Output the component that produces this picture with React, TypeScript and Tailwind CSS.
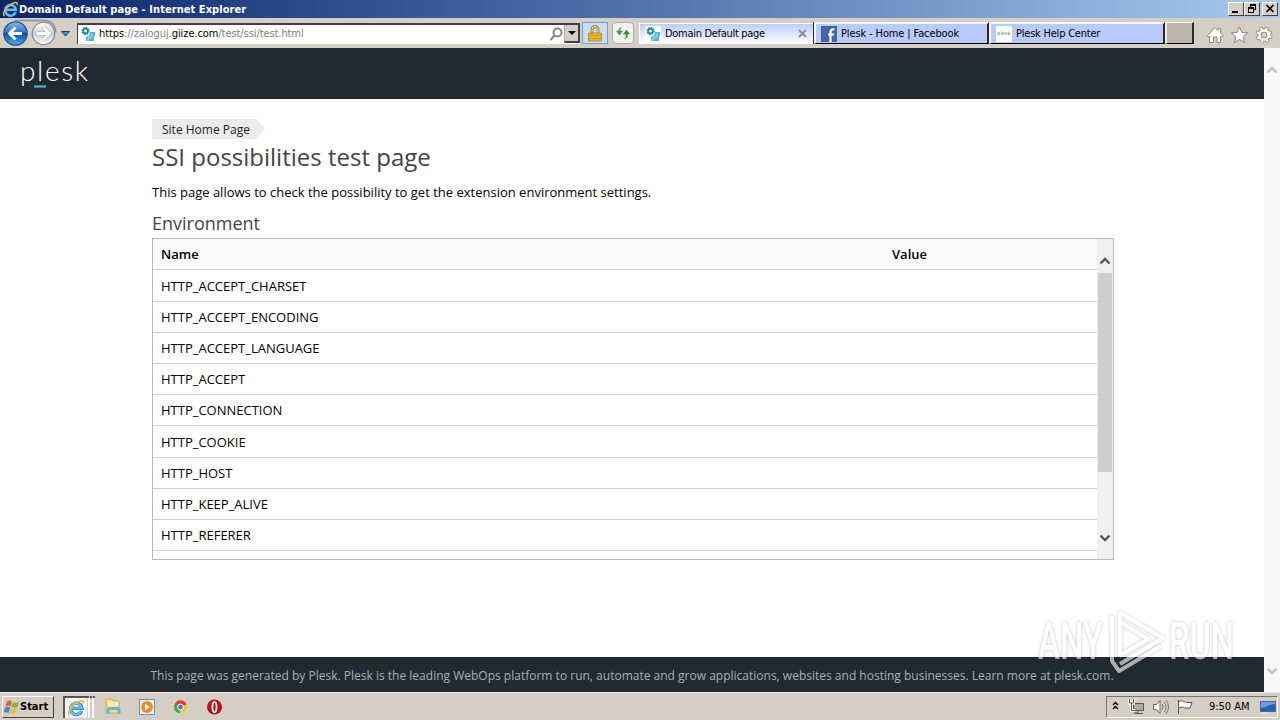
import type { ReactNode } from 'react';
import clsx from 'clsx';

const rows = [
  { name: 'HTTP_ACCEPT_CHARSET', tall: true },
  { name: 'HTTP_ACCEPT_ENCODING' },
  { name: 'HTTP_ACCEPT_LANGUAGE' },
  { name: 'HTTP_ACCEPT' },
  { name: 'HTTP_CONNECTION' },
  { name: 'HTTP_COOKIE', tall: true },
  { name: 'HTTP_HOST' },
  { name: 'HTTP_KEEP_ALIVE' },
  { name: 'HTTP_REFERER' },
];

function IeIcon({ size }: { size: number }) {
  return (
    <svg width={size} height={size} viewBox="0 0 20 20" fill="none" className="shrink-0">
      <path d="M16.2 13.3A6.3 6.3 0 1 1 16.6 10.4H5" stroke="#1769b5" strokeWidth="3.6" />
      <path d="M16 13A6.3 6.3 0 1 1 16.3 10.4H5" stroke="#5cc0f2" strokeWidth="2.6" />
      <path d="M3 17.6C-1 16 5.500 6 13 2.700c4-1.800 6-.6 4.900 2.400" stroke="#f1b82d" strokeWidth="1.800" />
    </svg>
  );
}

function DomainIcon() {
  return (
    <svg width="16" height="16" viewBox="0 0 16 16" className="shrink-0">
      <path d="M0 0h16v16H0z" fill="#fff" />
      <circle cx="5.5" cy="5" r="2.4" fill="none" stroke="#1c8190" strokeWidth="1.8" />
      <circle cx="5.5" cy="5" r="3.6" fill="none" stroke="#1c8190" strokeWidth="1.2" strokeDasharray="1.4 1.4" />
      <path d="M10 6h5v4l-1 1v4H6v-4l3-1z" fill="#50b6db" />
      <path d="M8 15v-3h3V9h3" stroke="#c9eefa" fill="none" strokeWidth="1" strokeDasharray="2 1" />
    </svg>
  );
}

function WindowButton({ children, className }: { children: ReactNode; className?: string }) {
  return (
    <div className={clsx('h-[14px] w-4 border border-t-white border-l-white border-r-[#404040] border-b-[#404040] bg-[#d6cfc6]', className)}>
      <svg width="14" height="12" viewBox="0 0 14 12" fill="none" stroke="#000" shapeRendering="crispEdges">
        {children}
      </svg>
    </div>
  );
}

function TitleBar() {
  return (
    <div className="flex h-[18px] items-center bg-gradient-to-r from-[#0a246a] via-[#5472ab] to-[#a6caf0] pr-0.5 pl-0.5">
      <IeIcon size={17} />
      <span className="flex-1 pt-px text-[11px] leading-[17px] font-bold tracking-[0.06px] whitespace-nowrap text-white">
        Domain Default page - Internet Explorer
      </span>
      <WindowButton>
        <path d="M3 9h6" strokeWidth="2" />
      </WindowButton>
      <WindowButton>
        <path d="M5 2h6" strokeWidth="2" />
        <path d="M5.500 2v3M10.500 2v5M8 6.500h3" />
        <path d="M3 5h6" strokeWidth="2" />
        <path d="M3.500 5v5M8.500 5v5M3 9.500h6" />
      </WindowButton>
      <WindowButton className="ml-0.5">
        <path d="M3.500 2l7 7M10.500 2l-7 7" strokeWidth="1.700" shapeRendering="auto" />
      </WindowButton>
    </div>
  );
}

function NavButtons() {
  return (
    <svg width="77" height="30" viewBox="0 0 77 30" className="shrink-0">
      <defs>
        <linearGradient id="back" x1="0" y1="0" x2="0" y2="1">
          <stop offset="0" stopColor="#8bb9ee" />
          <stop offset=".45" stopColor="#2d6ecb" />
          <stop offset=".5" stopColor="#0c47a5" />
          <stop offset="1" stopColor="#48b4f4" />
        </linearGradient>
        <linearGradient id="forward" x1="0" y1="0" x2="0" y2="1">
          <stop offset="0" stopColor="#fbfcfd" />
          <stop offset=".5" stopColor="#cbd1d9" />
          <stop offset="1" stopColor="#f9fbfd" />
        </linearGradient>
      </defs>
      <path d="M15 2.500h29c7 0 11 5 12 12" fill="none" stroke="#8995a4" strokeWidth="1.500" />
      <circle cx="15.500" cy="15.500" r="11.700" fill="url(#back)" stroke="#294e80" strokeWidth="1.200" />
      <path d="M22 15.500H10M15.500 9.500l-6 6 6 6" fill="none" stroke="#fff" strokeWidth="3" />
      <circle cx="43.500" cy="15.500" r="11.200" fill="url(#forward)" stroke="#7b8490" strokeWidth="1.100" />
      <path d="M37 15.500h12M43.500 9.500l6 6-6 6" fill="none" stroke="#a4abb3" strokeWidth="4" />
      <path d="M37 15.500h12M43.500 9.500l6 6-6 6" fill="none" stroke="#fff" strokeWidth="2.800" />
      <path d="M61.500 13.500h8l-4 4.500z" fill="#3d98cf" stroke="#153e7a" />
    </svg>
  );
}

function AddressBar() {
  return (
    <div className="flex h-[21px] w-[503px] shrink-0 items-center border-t-2 border-l border-[#453b50] bg-white pl-0.5">
      <DomainIcon />
      <span className="ml-[3px] flex-1 pt-px text-[11px] tracking-[-0.08px] whitespace-nowrap text-[#808080]">
        <span className="text-black">https</span>://zaloguj.<span className="text-black">giize.com</span>/test/ssi/test.html
      </span>
      <svg width="15" height="15" viewBox="0 0 15 15" fill="none" stroke="#858585">
        <circle cx="8.500" cy="5.500" r="4" strokeWidth="2" />
        <path d="M5.500 8.500L1.500 13" strokeWidth="2.200" />
      </svg>
      <div className="flex h-[18px] w-4 items-center justify-center border-r-2 border-b-2 border-l border-l-[#aaa] border-r-[#404040] border-b-[#404040] bg-[#d5cec5]">
        <svg width="8" height="4" viewBox="0 0 8 4">
          <path d="M0 0h8L4 4z" />
        </svg>
      </div>
    </div>
  );
}

function Tab({ icon, label, className }: { icon: ReactNode; label: string; className: string }) {
  return (
    <div className={clsx('flex h-[22px] shrink-0 items-center border-t-2 border-r-2 border-b border-l-2 border-t-[#f5f5f5] border-r-[#292929] border-b-black border-l-[#f5f5f5] bg-[#b9caff] pl-[5px]', className)}>
      {icon}
      <span className="ml-1 pt-px text-[11px] whitespace-nowrap">{label}</span>
    </div>
  );
}

function Toolbar() {
  return (
    <div className="flex h-[30px] items-center bg-[#d5cec5]">
      <NavButtons />
      <AddressBar />
      <div className="ml-0.5 flex h-[22px] w-[26px] shrink-0 items-center justify-center border border-[#6e9fd8] bg-[#c9ddf8]">
        <svg width="14" height="17" viewBox="0 0 14 17">
          <path d="M4 8V4.500a3 3 0 0 1 6 0V8" fill="none" stroke="#a98443" strokeWidth="3" />
          <path d="M4 8V4.500a3 3 0 0 1 6 0V8" fill="none" stroke="#f3dca0" />
          <path d="M.5 8h13v8H.5z" fill="#eeb321" stroke="#a47313" strokeWidth=".6" />
          <path d="M1 10.500h12M1 13.500h12" stroke="#d09c22" />
        </svg>
      </div>
      <div className="ml-1 flex h-[22px] w-[22px] shrink-0 items-center justify-center rounded-sm border border-[#b0aca7] bg-[#eff2ef]">
        <svg width="14" height="14" viewBox="0 0 14 14">
          <path d="M5.500 1.500C3.500 1.500 4 4 4 5h2.500L3.500 9 .5 5H3C3 2 4 1.500 5.500 1.500z" fill="#4b9b49" stroke="#36853b" strokeWidth=".5" />
          <path d="M8.500 12.500C10.500 12.500 10 10 10 8H7.500L10.500 4l3 4H11.500c0 3-1 4.500-3 4.500z" fill="#299737" stroke="#23802d" strokeWidth=".5" />
        </svg>
      </div>
      <div className="ml-[5px] flex h-[21px] w-[174px] shrink-0 items-center border-t border-l border-white bg-gradient-to-b from-[#bccdfb] to-white pr-1.5 pl-[5px]">
        <DomainIcon />
        <span className="ml-1 flex-1 pt-px text-[11px] tracking-[-0.3px] whitespace-nowrap">Domain Default page</span>
        <svg width="9" height="9" viewBox="0 0 9 9" stroke="#858a98" strokeWidth="1.800">
          <path d="M1 1l7 7M8 1L1 8" />
        </svg>
      </div>
      <div className="h-[22px] w-px shrink-0 bg-[#292929]" />
      <Tab
        label="Plesk - Home | Facebook"
        className="w-[175px] tracking-[-0.12px]"
        icon={
          <svg width="16" height="16" viewBox="0 0 16 16">
            <path d="M0 0h16v16H0z" fill="#4264aa" />
            <path d="M9.500 16V6.500c0-2.500 1-3.500 4-3.200M7 8.500h6" fill="none" stroke="#fff" strokeWidth="2.200" />
          </svg>
        }
      />
      <Tab
        label="Plesk Help Center"
        className="w-[176px] pl-1.5 tracking-[-0.22px]"
        icon={<span className="flex h-4 w-4 items-center justify-center bg-white text-[5px] tracking-[0.3px] text-[#555]">plesk</span>}
      />
      <div className="h-[22px] w-[29px] shrink-0 border-t border-r-2 border-b border-l-2 border-t-white border-r-[#292929] border-b-black border-l-[#eee] bg-[#bdb5ad]" />
      <svg width="86" height="30" viewBox="1194 18 86 30" fill="#fff" stroke="#8b8580" strokeLinejoin="round">
        <path d="M1207.500 35.500L1215 27.500l3 3V28.500h2.500V33l2.500 2.500-1.500 1.500-1-1v6.500H1217V37H1213.500v5.500H1209.500V36l-1 1z" />
        <path d="M1239.500 27l2.300 5.300 5.700.5-4.300 3.800 1.300 5.900-5-3.200-5 3.200 1.300-5.900-4.300-3.800 5.700-.5z" />
        <circle cx="1264" cy="35" r="6.400" fill="none" stroke="#8b8580" strokeWidth="4" strokeDasharray="3.200 1.827" />
        <circle cx="1264" cy="35" r="4.600" fill="none" stroke="#8b8580" strokeWidth="4.400" />
        <circle cx="1264" cy="35" r="6.400" fill="none" stroke="#fff" strokeWidth="2.600" strokeDasharray="2.100 2.927" strokeDashoffset="-.55" />
        <circle cx="1264" cy="35" r="4.600" fill="none" stroke="#fff" strokeWidth="2.500" />
      </svg>
    </div>
  );
}

function Chevron({ down, className }: { down?: boolean; className?: string }) {
  return (
    <svg width="12" height="8" viewBox="0 0 12 8" fill="none" stroke="currentColor" strokeWidth="2.300" className={className}>
      <path d={down ? 'M1.500 1.500L6 6l4.500-4.500' : 'M1.500 6.500L6 2l4.500 4.500'} />
    </svg>
  );
}

function EnvTable() {
  return (
    <div className="flex h-[322px] w-[962px] overflow-hidden border border-[#bababa] text-[13px]">
      <div className="flex-1">
        <div className="flex h-[31px] items-center border-b border-[#d0d0d0] bg-[#fafafa] px-2 pt-0.5 font-semibold">
          <span className="w-[731px]">Name</span>
          <span>Value</span>
        </div>
        {rows.map((row) => (
          <div key={row.name} className={clsx('flex items-center border-b border-[#d0d0d0] px-2', row.tall ? 'h-8 pt-[3px]' : 'h-[31px] pt-0.5')}>
            {row.name}
          </div>
        ))}
      </div>
      <div className="flex w-4 flex-col items-center bg-[#f0f0f0] text-[#555]">
        <Chevron className="mt-[18px]" />
        <div className="mt-2 h-[199px] w-[14px] bg-[#cdcdcd]" />
        <Chevron down className="mt-[62px]" />
      </div>
    </div>
  );
}

function Watermark() {
  return (
    <svg
      className="absolute top-[555px] left-[1030px] overflow-visible drop-shadow-[0_0_1.5px_rgba(0,0,0,0.4)]"
      width="210"
      height="75"
      viewBox="0 0 210 75"
      fontFamily="Roboto"
      opacity=".62"
    >
      <g fill="#fff" fontSize="51" fontWeight="500">
        <text x="8" y="56" textLength="65" lengthAdjust="spacingAndGlyphs">ANY</text>
        <text x="139" y="56" textLength="65" lengthAdjust="spacingAndGlyphs">RUN</text>
      </g>
      <g fill="none" stroke="#fff" strokeWidth="4" strokeLinejoin="round">
        <path d="M90 53V10l43 25-43 26M90 19l28 17-29 17" />
        <path d="M82 13v45l7 10 42-25" />
      </g>
    </svg>
  );
}

function Page() {
  return (
    <div className="relative flex h-[644px] bg-white font-['Open_Sans',sans-serif]">
      <div className="flex flex-1 flex-col">
        <header className="h-[51px] bg-[#222a31] pt-[7px] pl-5">
          <svg width="70" height="36" viewBox="0 0 70 36" className="overflow-visible">
            <text x="0" y="26" fill="#fff" fontFamily="Lato" fontSize="28" fontWeight="300" textLength="68" lengthAdjust="spacing">plesk</text>
            <path d="M14 31.500h12" stroke="#53bce6" strokeWidth="2" />
          </svg>
        </header>
        <main className="flex-1 pt-5 pl-[152px] text-black">
          <div className="flex h-5 w-[113px] items-center bg-[#ebebeb] pt-0.5 pl-[10px] text-[12px] whitespace-nowrap text-[#222] [clip-path:polygon(0_0,104px_0,100%_50%,104px_100%,0_100%)]">
            Site Home Page
          </div>
          <h1 className="h-9 text-[24px] leading-9 text-[#444]">SSI possibilities test page</h1>
          <p className="mt-2 text-[13px] leading-[18px]">This page allows to check the possibility to get the extension environment settings.</p>
          <h2 className="mt-[9px] mb-px h-[27px] text-[18px] leading-[27px] text-[#444]">Environment</h2>
          <EnvTable />
        </main>
        <footer className="h-[35px] bg-[#222a31] pl-[150.5px] text-[12px] leading-[37px] tracking-[0.004px] whitespace-nowrap text-[#a9afb5]">
          This page was generated by Plesk. Plesk is the leading WebOps platform to run, automate and grow applications, websites and hosting businesses. Learn more at plesk.com.
        </footer>
      </div>
      <div className="flex w-4 flex-col items-center justify-between bg-[#f8f8f8] pt-[18px] pb-[17px] text-[#bdbdbd]">
        <Chevron />
        <Chevron down />
      </div>
      <Watermark />
    </div>
  );
}

function Taskbar() {
  return (
    <div className="flex h-7 items-center border-t border-[#eee] bg-[#d5cec5]">
      <div className="ml-0.5 flex h-[22px] w-[52px] items-center border border-t-white border-r-[#404040] border-b-[#404040] border-l-white">
        <svg width="16" height="16" viewBox="0 0 16 16" className="ml-px">
          <path d="M3 2.500c2-1.500 3.500-1 5 0L6.500 7.500C5 6.500 3.500 6.500 1.500 7.500z" fill="#e76027" />
          <path d="M9 3c2 1 4 .8 6-.3L13.500 8c-2 1-4 .8-6 0z" fill="#87b63b" />
          <path d="M1.200 8.500c2-1 3.500-.8 5 0L4.700 14C3 13-.2 13-1 14z" fill="#4488cd" />
          <path d="M7.200 9c2 1 4 .8 6-.2L11.700 14c-2 1-4 .8-6 0z" fill="#f3bd32" />
        </svg>
        <span className="pt-0.5 text-[11px] font-bold">Start</span>
      </div>
      <div className="ml-[9px] flex h-[22px] w-6 items-center justify-center border-t-2 border-l-2 border-[#555] bg-[#f5f3f0]">
        <IeIcon size={18} />
      </div>
      <div className="flex h-[22px] w-2 gap-0.5 border-t-2 border-dotted border-[#555] pl-px">
        <span className="w-0.5 bg-white" />
        <span className="w-0.5 bg-white" />
      </div>
      <svg width="128" height="26" viewBox="95 694 128 26">
        <path d="M106 699h6l1 2h6v12h-13z" fill="#f4dd83" stroke="#c6a13f" strokeWidth=".7" />
        <path d="M108 703h10M108 705h10" stroke="#fff" />
        <path d="M106.500 714v-5l2-2h10l2 2v5h-3v-4h-8v4z" fill="#65b7dd" />
        <path d="M139.500 699.500h15v15h-15z" fill="#e9f2fa" stroke="#5a95cc" />
        <circle cx="147" cy="707" r="6" fill="#f28a22" />
        <path d="M145 703.500l5 3.500-5 3.500z" fill="#fff" />
        <circle cx="180.500" cy="707" r="6.500" fill="#f3c728" />
        <path d="M180.500 707l-6-2.500a6.500 6.500 0 0 1 12.200 0z" fill="#e34135" />
        <path d="M180.500 707l-6-2.500a6.500 6.500 0 0 0 5 9z" fill="#36a853" />
        <circle cx="180.500" cy="707" r="2.900" fill="#367de0" stroke="#fff" />
        <circle cx="214.500" cy="707" r="7.500" fill="#b51219" />
        <ellipse cx="214.500" cy="707" rx="2" ry="5.200" fill="#9d0a10" stroke="#fff" strokeWidth="1.800" />
      </svg>
      <div className="mr-0.5 ml-auto flex h-[22px] w-[172px] items-center border border-t-[#77736f] border-r-white border-b-white border-l-[#77736f] pr-px">
        <svg width="96" height="20" viewBox="1107 697 96 20" fill="none">
          <path d="M1113 705l2.500-2.500L1118 705M1113 709l2.500-2.500L1118 709" stroke="#000" strokeWidth="1.400" />
          <path d="M1133.500 703.500h10v7h-10z" fill="#aaa" stroke="#555" />
          <path d="M1138 711v2h-4.500M1135 713.500h8" stroke="#555" />
          <path d="M1129.500 699v4h4v-4M1131.500 703v7.500h3" stroke="#fff" strokeWidth="3" />
          <path d="M1129.500 699v4h4v-4M1131.500 703v7.500h3" stroke="#555" />
          <path d="M1153.500 704.500h3l3.500-4v13l-3.500-4h-3z" fill="#fff" stroke="#666" />
          <path d="M1162 704q2 3 0 6M1164 702q4 5 0 10M1166 700q5 7 0 14" stroke="#777" />
          <path d="M1178.500 700v14M1179 701.500c4-2 5 1 7.500 1l5.500 0-2 5.500h-5.500c-1-1.500-3-1-5.500 0" fill="#fff" stroke="#555" />
        </svg>
        <span className="mr-auto ml-1.5 pt-0.5 text-[11px] tracking-[-0.02px] whitespace-nowrap">9:50 AM</span>
        <svg width="16" height="14" viewBox="0 0 16 14">
          <path d="M.5 1.500h15v10H.5z" fill="#2762b7" stroke="#3d699e" />
          <path d="M1 2h14v2C9 4 7 8 1 8z" fill="#6a9edc" />
          <path d="M1 13h7" stroke="#eef" />
        </svg>
      </div>
    </div>
  );
}

export default function App() {
  return (
    <div className="h-[720px] w-[1280px] overflow-hidden font-['DejaVu_Sans_Condensed','DejaVu_Sans',sans-serif] text-black">
      <TitleBar />
      <Toolbar />
      <Page />
      <Taskbar />
    </div>
  );
}
